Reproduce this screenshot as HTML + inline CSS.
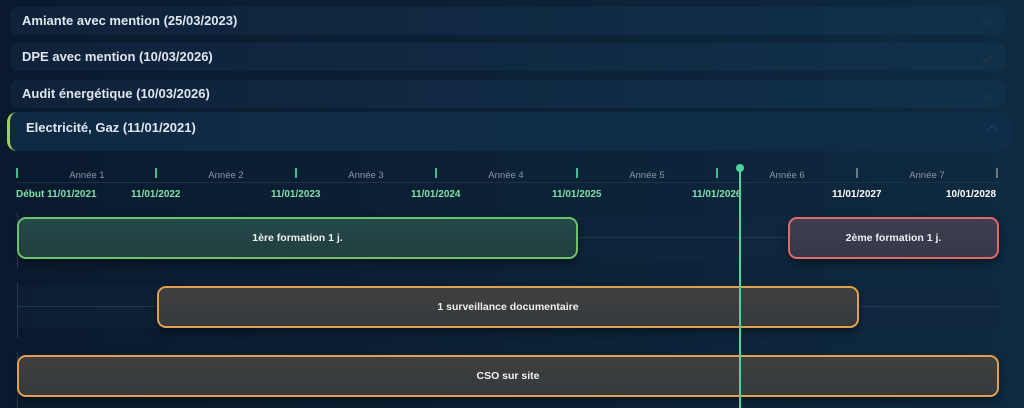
<!DOCTYPE html>
<html><head><meta charset="utf-8"><style>
*{margin:0;padding:0;box-sizing:border-box}
body{width:1024px;height:408px;overflow:hidden;background:linear-gradient(90deg,#0a1a2e 0%,#0c2338 60%,#0e2a40 100%);font-family:"Liberation Sans",sans-serif;position:relative}
.row{position:absolute;left:10px;width:995px;height:28px;border-radius:8px;background:linear-gradient(90deg,#0f223a,#10304a);color:#dfe6ee;font-weight:bold;font-size:13px;line-height:28px;padding-left:12px}
.chev{position:absolute;right:14px;top:9px;width:9px;height:9px;border-right:2px solid #1c3448;border-bottom:2px solid #1c3448;transform:rotate(45deg)}
.abs{position:absolute}
.tick{position:absolute;top:168px;width:2px;height:10px;background:#3fbf8f}
.yl{position:absolute;top:170px;width:140px;text-align:center;font-size:9.5px;color:#8a96a3}
.dt{position:absolute;top:189px;font-size:10px;font-weight:bold;color:#7fe0a8}
.lane{position:absolute;left:17px;width:982px;height:42px;background:rgba(20,40,62,.35)}
.lane:after{content:"";position:absolute;left:0;right:0;top:20px;height:1px;background:#1d3a4c}
.bar{position:absolute;height:42px;border-radius:9px;border:2px solid;color:#f0f0f0;font-weight:bold;font-size:10.5px;display:flex;align-items:center;justify-content:center;box-shadow:0 4px 8px rgba(0,0,0,.4)}
</style></head><body>
<div class="row" style="top:7px">Amiante avec mention (25/03/2023)<div class="chev"></div></div>
<div class="row" style="top:43px">DPE avec mention (10/03/2026)<div class="chev"></div></div>
<div class="row" style="top:80px">Audit énergétique (10/03/2026)<div class="chev"></div></div>
<div class="row" style="top:112px;left:7px;width:1004px;height:39px;line-height:32px;padding-left:16px;background:linear-gradient(90deg,#0f2a44,#0f2d48);border-left:3px solid #9ed05a;border-radius:10px">Electricité, Gaz (11/01/2021)<div class="chev" style="transform:rotate(-135deg);top:14px;border-color:#1a3c5c"></div></div>
<div class="abs" style="left:17px;top:182px;width:982px;height:1px;background:#1c3346"></div>
<div class="tick" style="left:16px"></div><div class="tick" style="left:155px"></div><div class="tick" style="left:295px"></div><div class="tick" style="left:435px"></div><div class="tick" style="left:576px"></div><div class="tick" style="left:716px"></div><div class="tick" style="left:856px;background:#6b7885"></div><div class="tick" style="left:996px;background:#6b7885"></div>
<div class="yl" style="left:17px">Année 1</div><div class="yl" style="left:156px">Année 2</div><div class="yl" style="left:296px">Année 3</div><div class="yl" style="left:436px">Année 4</div><div class="yl" style="left:577px">Année 5</div><div class="yl" style="left:717px">Année 6</div><div class="yl" style="left:857px">Année 7</div>
<div class="dt" style="left:16px">Début 11/01/2021</div>
<div class="dt" style="left:131px">11/01/2022</div>
<div class="dt" style="left:271px">11/01/2023</div>
<div class="dt" style="left:411px">11/01/2024</div>
<div class="dt" style="left:552px">11/01/2025</div>
<div class="dt" style="left:692px">11/01/2026</div>
<div class="dt" style="left:832px;color:#fff">11/01/2027</div>
<div class="dt" style="left:946px;color:#fff">10/01/2028</div>
<div class="lane" style="top:217px"></div>
<div class="lane" style="top:286px"></div>
<div class="lane" style="top:355px"></div>
<div class="abs" style="left:17px;top:213px;width:1px;height:55px;background:#2a3a4c"></div>
<div class="abs" style="left:17px;top:283px;width:1px;height:55px;background:#2a3a4c"></div>
<div class="abs" style="left:17px;top:352px;width:1px;height:56px;background:#2a3a4c"></div>
<div class="bar" style="left:17px;top:217px;width:561px;border-color:#6cc46a;background:linear-gradient(#25484a,#213f3e)">1ère formation 1 j.</div>
<div class="bar" style="left:788px;top:217px;width:211px;border-color:#e06a6a;background:linear-gradient(#3e3e50,#36384a)">2ème formation 1 j.</div>
<div class="bar" style="left:157px;top:286px;width:702px;border-color:#e0a050;background:linear-gradient(#3e3f40,#363a3c)">1 surveillance documentaire</div>
<div class="bar" style="left:17px;top:355px;width:982px;border-color:#e0a050;background:linear-gradient(#3e3f40,#363a3c)">CSO sur site</div>
<div class="abs" style="left:739px;top:167px;width:2px;height:241px;background:#4dd39b"></div>
<div class="abs" style="left:736px;top:164px;width:8px;height:8px;border-radius:50%;background:#4dd39b"></div>
</body></html>
